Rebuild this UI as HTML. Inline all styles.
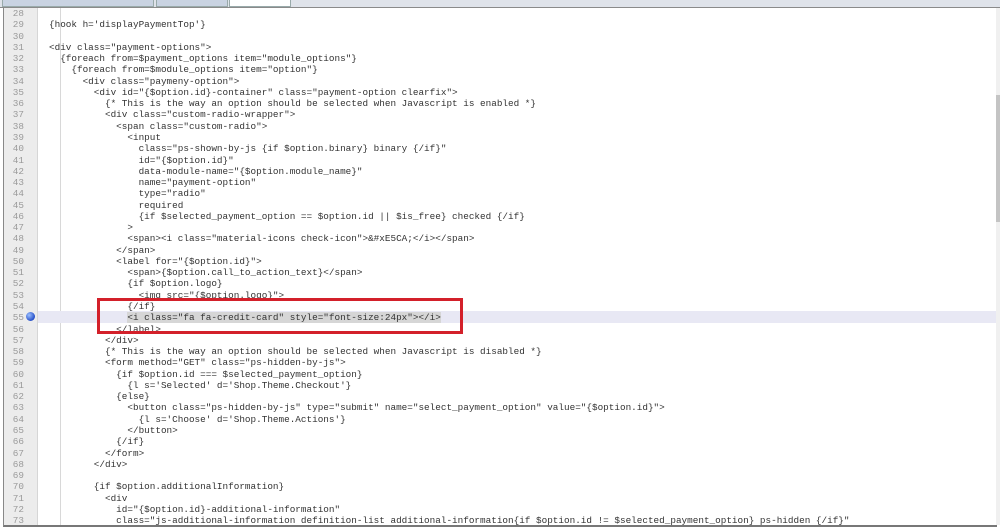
<!DOCTYPE html>
<html><head><meta charset="utf-8"><style>
html,body{margin:0;padding:0;width:1000px;height:529px;overflow:hidden;background:#fff;position:relative;font-family:"Liberation Mono",monospace;}
.tabs{position:absolute;left:0;top:0;width:1000px;height:7px;background:#dfe3ea;border-bottom:1px solid #8a8a8a;}
.tab{position:absolute;top:0;height:6px;background:#c9d3e2;border:1px solid #9aa;border-top:none;}
.frame{position:absolute;left:3px;top:8px;width:993px;height:517px;border-left:1px solid #888;border-bottom:2px solid #777;}
.gutter{position:absolute;left:4px;top:8px;width:33px;height:517px;background:#ececec;border-right:1px solid #d6d6d6;}
.vline{position:absolute;left:60px;top:8px;width:1px;height:517px;background:#d8d8d8;}
.hl{position:absolute;left:38px;top:311px;width:958px;height:12px;background:#e8e8f4;}
.sb{position:absolute;left:996px;top:8px;width:4px;height:517px;background:#f0f0f0;}
.thumb{position:absolute;left:996px;top:95px;width:4px;height:127px;background:#c4c4c4;}
.ln{position:absolute;left:4px;width:20px;text-align:right;font-size:9.33px;color:#9a9a9a;line-height:11px;}
.c{position:absolute;left:49px;font-size:9.33px;color:#333;white-space:pre;line-height:11px;}
.box{position:absolute;left:97px;top:298px;width:360px;height:30px;border:3px solid #d3202a;}
.dot{position:absolute;left:26px;top:312px;width:9px;height:9px;border-radius:50%;background:radial-gradient(circle at 35% 35%,#9cc0ff,#2750c8 70%);}
.sel{background:#d6d6d6;}
</style></head><body>
<div class="tabs"><div class="tab" style="left:2px;width:150px"></div><div class="tab" style="left:156px;width:70px"></div><div class="tab" style="left:229px;width:60px;background:#fff"></div></div>
<div class="gutter"></div>
<div class="vline"></div>
<div class="hl"></div>
<div class="sb"></div><div class="thumb"></div>
<div class="frame"></div>
<div id="code"></div>
<div class="dot"></div>
<div class="box"></div>
<script>
var L=[
[28,0,""],
[29,0,"{hook h='displayPaymentTop'}"],
[30,0,""],
[31,0,'<div class="payment-options">'],
[32,2,'{foreach from=$payment_options item="module_options"}'],
[33,4,'{foreach from=$module_options item="option"}'],
[34,6,'<div class="paymeny-option">'],
[35,8,'<div id="{$option.id}-container" class="payment-option clearfix">'],
[36,10,'{* This is the way an option should be selected when Javascript is enabled *}'],
[37,10,'<div class="custom-radio-wrapper">'],
[38,12,'<span class="custom-radio">'],
[39,14,'<input'],
[40,16,'class="ps-shown-by-js {if $option.binary} binary {/if}"'],
[41,16,'id="{$option.id}"'],
[42,16,'data-module-name="{$option.module_name}"'],
[43,16,'name="payment-option"'],
[44,16,'type="radio"'],
[45,16,'required'],
[46,16,'{if $selected_payment_option == $option.id || $is_free} checked {/if}'],
[47,14,'>'],
[48,14,'<span><i class="material-icons check-icon">&#xE5CA;</i></span>'],
[49,12,'</span>'],
[50,12,'<label for="{$option.id}">'],
[51,14,'<span>{$option.call_to_action_text}</span>'],
[52,14,'{if $option.logo}'],
[53,16,'<img src="{$option.logo}">'],
[54,14,'{/if}'],
[55,14,'<i class="fa fa-credit-card" style="font-size:24px"></i>'],
[56,12,'</label>'],
[57,10,'</div>'],
[58,10,'{* This is the way an option should be selected when Javascript is disabled *}'],
[59,10,'<form method="GET" class="ps-hidden-by-js">'],
[60,12,'{if $option.id === $selected_payment_option}'],
[61,14,"{l s='Selected' d='Shop.Theme.Checkout'}"],
[62,12,'{else}'],
[63,14,'<button class="ps-hidden-by-js" type="submit" name="select_payment_option" value="{$option.id}">'],
[64,16,"{l s='Choose' d='Shop.Theme.Actions'}"],
[65,14,'</button>'],
[66,12,'{/if}'],
[67,10,'</form>'],
[68,8,'</div>'],
[69,0,''],
[70,8,'{if $option.additionalInformation}'],
[71,10,'<div'],
[72,12,'id="{$option.id}-additional-information"'],
[73,12,'class="js-additional-information definition-list additional-information{if $option.id != $selected_payment_option} ps-hidden {/if}"']
];
var h='';
L.forEach(function(r){
 var y=8+(r[0]-28)*11.27;
 h+='<div class="ln" style="top:'+y+'px">'+r[0]+'</div>';
 var t=r[2].replace(/&/g,'&amp;').replace(/</g,'&lt;');
 if(r[0]==55) t='<span class="sel">'+t+'</span>';
 h+='<div class="c" style="top:'+y+'px">'+' '.repeat(r[1])+t+'</div>';
});
document.getElementById('code').innerHTML=h;
</script>
</body></html>
